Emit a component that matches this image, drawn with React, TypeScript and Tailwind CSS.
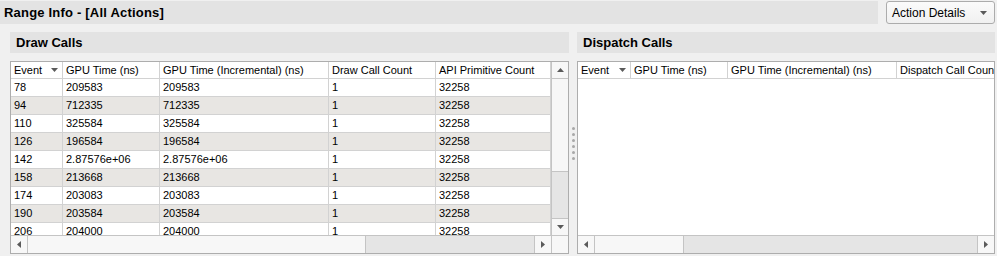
import React from "react";

const rows = [
  ["78", "209583", "209583", "1", "32258"],
  ["94", "712335", "712335", "1", "32258"],
  ["110", "325584", "325584", "1", "32258"],
  ["126", "196584", "196584", "1", "32258"],
  ["142", "2.87576e+06", "2.87576e+06", "1", "32258"],
  ["158", "213668", "213668", "1", "32258"],
  ["174", "203083", "203083", "1", "32258"],
  ["190", "203584", "203584", "1", "32258"],
  ["206", "204000", "204000", "1", "32258"],
];

const drawCols = ["w-[52px]", "w-[97px]", "w-[169px]", "w-[107px]", "w-[115px]"];

const Arrow = ({ dir }: { dir: "up" | "down" | "left" | "right" }) => {
  const pts = {
    up: "0,4 7,4 3.5,0",
    down: "0,0 7,0 3.5,4",
    left: "4,0 4,7 0,3.5",
    right: "0,0 0,7 4,3.5",
  }[dir];
  const vertical = dir === "up" || dir === "down";
  return (
    <svg width={vertical ? 7 : 4} height={vertical ? 4 : 7} viewBox={vertical ? "0 0 7 4" : "0 0 4 7"}>
      <polygon points={pts} fill="#5a5a5a" />
    </svg>
  );
};

const HeaderCell = ({ w, label, sort }: { w: string; label: string; sort?: boolean }) => (
  <div className={`${w} shrink-0 h-full flex items-center pl-[3px] pr-[4px] border-r border-[#d2d2d2] whitespace-nowrap overflow-hidden`}>
    <span className="flex-1">{label}</span>
    {sort && <Arrow dir="down" />}
  </div>
);

const SectionBand = ({ title }: { title: string }) => (
  <div className="h-[21px] bg-[#e3e3e3] flex items-center pl-[6px] text-[13px] font-bold text-black">
    {title}
  </div>
);

const HScroll = ({ thumb, corner }: { thumb: string; corner?: boolean }) => (
  <div className="h-[18px] border-t border-[#c4c4c4] flex">
    <div className="w-[17px] border-r border-[#c4c4c4] bg-[#f7f7f7] flex items-center justify-center">
      <Arrow dir="left" />
    </div>
    <div className={`${thumb} border-r border-[#c4c4c4] bg-[#f7f7f7]`} />
    <div className="flex-1 bg-[#e5e5e5]" />
    <div className="w-[17px] border-l border-[#c4c4c4] bg-[#f7f7f7] flex items-center justify-center">
      <Arrow dir="right" />
    </div>
    {corner && <div className="w-[17px] border-l border-[#c4c4c4] bg-[#f7f7f7]" />}
  </div>
);

export default function App() {
  return (
    <div className="w-[997px] h-[256px] bg-[#f0f0f0] overflow-hidden font-['Tahoma','Liberation_Sans',sans-serif] text-[11px] text-black">
      {/* Top bar */}
      <div className="flex pt-[1px]">
        <div className="w-[878px] h-[23px] bg-[#e3e3e3] flex items-center pl-[4px] text-[13px] font-bold tracking-[0.2px]">
          Range Info - [All Actions]
        </div>
        <div className="ml-[8px] w-[109px] h-[23px] rounded-[3px] border border-[#acacac] bg-gradient-to-b from-[#fbfbfb] to-[#f0f0f0] flex items-center pl-[5px] pr-[7px] text-[12px]">
          <span className="flex-1">Action Details</span>
          <Arrow dir="down" />
        </div>
      </div>

      <div className="flex pl-[10px] pt-[8px]">
        {/* Draw calls */}
        <div className="w-[559px] flex flex-col">
          <SectionBand title="Draw Calls" />
          <div className="mt-[8px] h-[193px] border border-[#adadad] bg-white flex flex-col">
            <div className="flex h-[173px]">
              <div className="w-[540px] flex flex-col">
                <div className="h-[17px] border-b border-[#d2d2d2] flex">
                  <HeaderCell w={drawCols[0]} label="Event" sort />
                  <HeaderCell w={drawCols[1]} label="GPU Time (ns)" />
                  <HeaderCell w={drawCols[2]} label="GPU Time (Incremental) (ns)" />
                  <HeaderCell w={drawCols[3]} label="Draw Call Count" />
                  <HeaderCell w={drawCols[4]} label="API Primitive Count" />
                </div>
                <div className="h-[156px] overflow-hidden">
                  {rows.map((r, i) => (
                    <div
                      key={r[0]}
                      className={`h-[18px] flex border-b border-[#d2d2d2] ${i % 2 ? "bg-[#e8e6e3]" : "bg-white"}`}
                    >
                      {r.map((c, j) => (
                        <div
                          key={j}
                          className={`${drawCols[j]} shrink-0 h-full flex items-center pl-[3px] border-r border-[#d2d2d2]`}
                        >
                          {c}
                        </div>
                      ))}
                    </div>
                  ))}
                </div>
              </div>
              {/* vertical scrollbar */}
              <div className="w-[17px] border-l border-[#c4c4c4] flex flex-col">
                <div className="h-[17px] border-b border-[#c4c4c4] bg-[#f7f7f7] flex items-center justify-center">
                  <Arrow dir="up" />
                </div>
                <div className="h-[93px] border-b border-[#c4c4c4] bg-[#f7f7f7]" />
                <div className="flex-1 bg-[#e5e5e5]" />
                <div className="h-[17px] border-t border-[#c4c4c4] bg-[#f7f7f7] flex items-center justify-center">
                  <Arrow dir="down" />
                </div>
              </div>
            </div>
            <HScroll thumb="w-[338px]" corner />
          </div>
        </div>

        {/* splitter */}
        <div className="w-[8px] flex flex-col items-center justify-center gap-[3px] pt-[1px]">
          {[0, 1, 2, 3, 4, 5].map((d) => (
            <div key={d} className="w-[3px] h-[3px] rounded-full bg-[#a8a8a8]" />
          ))}
        </div>

        {/* Dispatch calls */}
        <div className="w-[418px] flex flex-col">
          <SectionBand title="Dispatch Calls" />
          <div className="mt-[8px] h-[193px] border border-[#adadad] bg-white flex flex-col">
            <div className="h-[17px] border-b border-[#d2d2d2] flex overflow-hidden">
              <HeaderCell w="w-[53px]" label="Event" sort />
              <HeaderCell w="w-[97px]" label="GPU Time (ns)" />
              <HeaderCell w="w-[169px]" label="GPU Time (Incremental) (ns)" />
              <HeaderCell w="w-[120px]" label="Dispatch Call Count" />
            </div>
            <div className="h-[156px]" />
            <HScroll thumb="w-[89px]" />
          </div>
        </div>
      </div>
    </div>
  );
}
